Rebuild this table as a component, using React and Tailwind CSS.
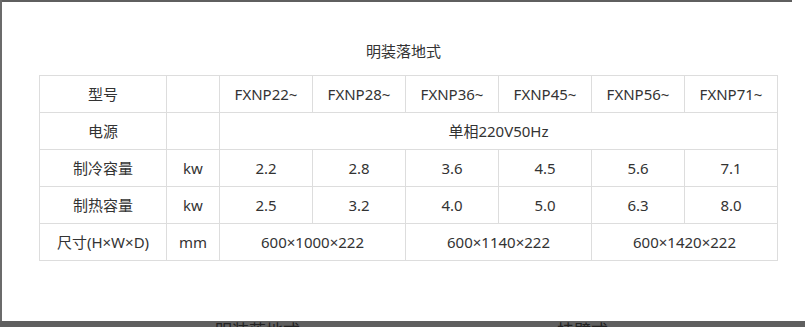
import React from 'react';

const models = ['FXNP22~', 'FXNP28~', 'FXNP36~', 'FXNP45~', 'FXNP56~', 'FXNP71~'];
const cooling = ['2.2', '2.8', '3.6', '4.5', '5.6', '7.1'];
const heating = ['2.5', '3.2', '4.0', '5.0', '6.3', '8.0'];
const sizes = ['600×1000×222', '600×1140×222', '600×1420×222'];

const cell = 'border border-[#dddddd] h-[37px] p-0 text-center align-middle font-normal';

const App = () => {
    return (
        <div
            className="w-[805px] h-[327px] overflow-hidden bg-[#5f5f5f] flex flex-col"
            style={{ fontFamily: '"Noto Sans", "Noto Sans CJK SC", sans-serif' }}
        >
            {/* Modal */}
            <div className="h-[321px] shrink-0 bg-white border-l-2 border-[#6b6b6b] flex flex-col">
                <div className="h-[2px] w-[790px] bg-[#5f5f5f]" />
                <div className="pt-[39px] text-center text-[15px] leading-[20px] text-[#333333]">明装落地式</div>
                <table className="mt-[14px] ml-[37px] w-[739px] table-fixed border-collapse text-[15px] text-[#333333]">
                    <colgroup>
                        <col className="w-[127px]" />
                        <col className="w-[53px]" />
                        {models.map((m) => (
                            <col key={m} className="w-[93px]" />
                        ))}
                    </colgroup>
                    <tbody>
                        <tr>
                            <td className={cell}>型号</td>
                            <td className={cell}></td>
                            {models.map((m) => (
                                <td key={m} className={cell}>{m}</td>
                            ))}
                        </tr>
                        <tr>
                            <td className={cell}>电源</td>
                            <td className={cell}></td>
                            <td className={cell} colSpan={6}>单相220V50Hz</td>
                        </tr>
                        <tr>
                            <td className={cell}>制冷容量</td>
                            <td className={cell}>kw</td>
                            {cooling.map((v, i) => (
                                <td key={i} className={cell}>{v}</td>
                            ))}
                        </tr>
                        <tr>
                            <td className={cell}>制热容量</td>
                            <td className={cell}>kw</td>
                            {heating.map((v, i) => (
                                <td key={i} className={cell}>{v}</td>
                            ))}
                        </tr>
                        <tr>
                            <td className={cell}>尺寸(H×W×D)</td>
                            <td className={cell}>mm</td>
                            {sizes.map((v) => (
                                <td key={v} className={cell} colSpan={2}>{v}</td>
                            ))}
                        </tr>
                    </tbody>
                </table>
            </div>

            {/* Page behind the overlay, clipped */}
            <div className="flex text-[17px] leading-[24px] text-[#222222] -mt-[2px]">
                <span className="ml-[215px]">明装落地式</span>
                <span className="ml-[257px]">挂壁式</span>
            </div>
        </div>
    );
};

export default App;
